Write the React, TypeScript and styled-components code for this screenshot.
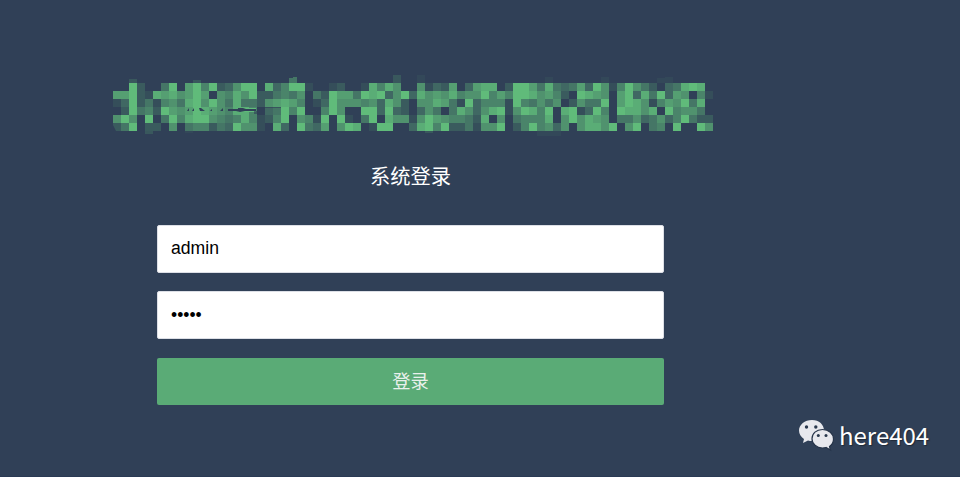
import React from "react";
import styled, { createGlobalStyle } from "styled-components";

const GlobalStyle = createGlobalStyle`
  * { box-sizing: border-box; }
  html, body { margin: 0; background: #304057; }
  body { overflow: hidden; }
`;

const Page = styled.div`
  position: relative;
  width: 960px;
  height: 477px;
  background: #304057;
  border-bottom: 1px solid #2a3a54;
  font-family: "Liberation Sans", "Noto Sans CJK SC", sans-serif;
`;

const Panel = styled.main`
  display: flex;
  flex-direction: column;
  align-items: center;
  width: 821px;
  padding-top: 75px;
`;

const Banner = styled.svg`
  display: block;
  width: 600px;
  height: 64px;
  margin-left: 5px;
`;

const Title = styled.h1`
  margin: 21px 0 35px;
  height: 30px;
  font: 400 20.3px/30px "Noto Sans CJK SC", sans-serif;
  color: #fff;
`;

const Form = styled.form`
  display: flex;
  flex-direction: column;
  width: 507px;
`;

const Field = styled.input`
  width: 100%;
  height: 48px;
  margin: 0 0 18px;
  padding: 0 13px 2px;
  border: 1px solid #dcdfe6;
  border-radius: 2px;
  outline: none;
  background: #fff;
  color: #000;
  font: 400 17.6px "Liberation Sans", sans-serif;
`;

const PasswordField = styled(Field)`
  padding-bottom: 0;
  margin-bottom: 19px;
  font-size: 17.5px;
`;

const Submit = styled.button`
  height: 47px;
  padding: 0 0 3px;
  border: 0;
  border-radius: 2px;
  background: #5aab76;
  color: #e9f0ec;
  font: 400 18.3px/44px "Noto Sans CJK SC", sans-serif;
`;

const Watermark = styled.div`
  position: absolute;
  left: 798px;
  top: 417px;
  display: flex;
  align-items: center;
  gap: 5px;
  height: 36px;
  color: #fff;
  font: 400 24px/36px "Noto Sans CJK SC", sans-serif;
  text-shadow: 1px 1px 1px rgba(20, 25, 35, 0.6);
`;

/* One coverage digit for each mosaic cell, 0 clear to 9 solid. */
const GRID = [
  "009200490795923699" + "0835991001200185860" + "061327037880299748" + "43473961596420348980",
  "779218786797065869" + "2245460429774989369" + "386768566957599867" + "52098760793849376051",
  "139241564896964844" + "2678750139666563862" + "066874193555195464" + "60264490798615769480",
  "029452976798765885" + "0349590059600993932" + "036404863689169859" + "08913950988680956640",
  "696090495899654585" + "1259065190910490866" + "169765542806045558" + "06968760446346359422",
  "249022060455243966" + "1083094370698019900" + "389592241669025956" + "36068869069045090096",
];

function Mosaic() {
  return (
    <Banner viewBox="0 0 600 64" shapeRendering="crispEdges" aria-hidden="true">
      <g fill="#60bb7a">
        {GRID.map((row, y) =>
          row.split("").map((level, x) => (
            <rect key={`${x}-${y}`} x={x * 8} y={8 + y * 8} width="8" height="8" opacity={Number(level) / 9} />
          )),
        )}
        <path d="M16 4h8v4h-8zM80 5h8v3h-8zM280 0h8v8h-8zM32 56h8v3h-8zM312 56h8v2h-8z" opacity=".2" />
        <path d="M176 3l8-1v6h-8z" opacity=".45" />
        <path d="M304 0h8v8h-8zM432 2h8v6h-8zM488 2h8v6h-8zM544 3h8v5h-8zM552 2h8v6h-8zM72 56h8v2h-8zM424 56h24v5h-24z" opacity=".07" />
        <path d="M125 33h18v1h-18zM125 36h18v1h-18z" />
      </g>
      <g fill="#304057" shapeRendering="auto">
        <path d="M74 36l2-3v3zM79 36l2-3v3zM86 33h2l4 3h-5zM97 36l2-2v2zM107 36l3-3v3zM115 34h10v-1h5l3 1h10v2h-11l-5 1-4-1h-8z" />
        <path d="M144 32h24v1h-24zM141 36h6v3h-6z" opacity=".6" />
        <path d="M0 50l3 6H0z" />
      </g>
    </Banner>
  );
}

function ChatLogo() {
  return (
    <svg width="36" height="34" viewBox="0 0 36 34" aria-hidden="true">
      <path d="M14 2C6.8 2 1 6.7 1 12.6c0 3.5 1.9 6.4 5 8.400L5 25l5-2.600c1.300.4 2.600.5 4 .5 7.200 0 12-4.500 12-10.300S21.200 2 14 2Z" fill="#e7e8ed" />
      <path d="M24.500 11.500c-6.200 0-10.500 4-10.500 9.200s4.500 9.300 10.500 9.300c1.200 0 2.400-.2 3.500-.5L32.500 32l-1-3.500c2.500-1.700 4-4.500 4-7.500 0-5.200-4.700-9.500-11-9.500Z" fill="#e7e8ed" stroke="#263449" strokeWidth="1.200" />
      <g fill="#29384d">
        <circle cx="8.500" cy="9" r="1.700" />
        <circle cx="17.800" cy="9" r="1.700" />
        <circle cx="20.300" cy="17.500" r="1.500" />
        <circle cx="28" cy="17.500" r="1.500" />
      </g>
    </svg>
  );
}

export default function App() {
  return (
    <Page>
      <GlobalStyle />
      <Panel>
        <Mosaic />
        <Title>系统登录</Title>
        <Form onSubmit={(event) => event.preventDefault()}>
          <Field type="text" defaultValue="admin" aria-label="username" />
          <PasswordField type="password" defaultValue="admin" aria-label="password" />
          <Submit type="submit">登录</Submit>
        </Form>
      </Panel>
      <Watermark>
        <ChatLogo />
        <span>here404</span>
      </Watermark>
    </Page>
  );
}
